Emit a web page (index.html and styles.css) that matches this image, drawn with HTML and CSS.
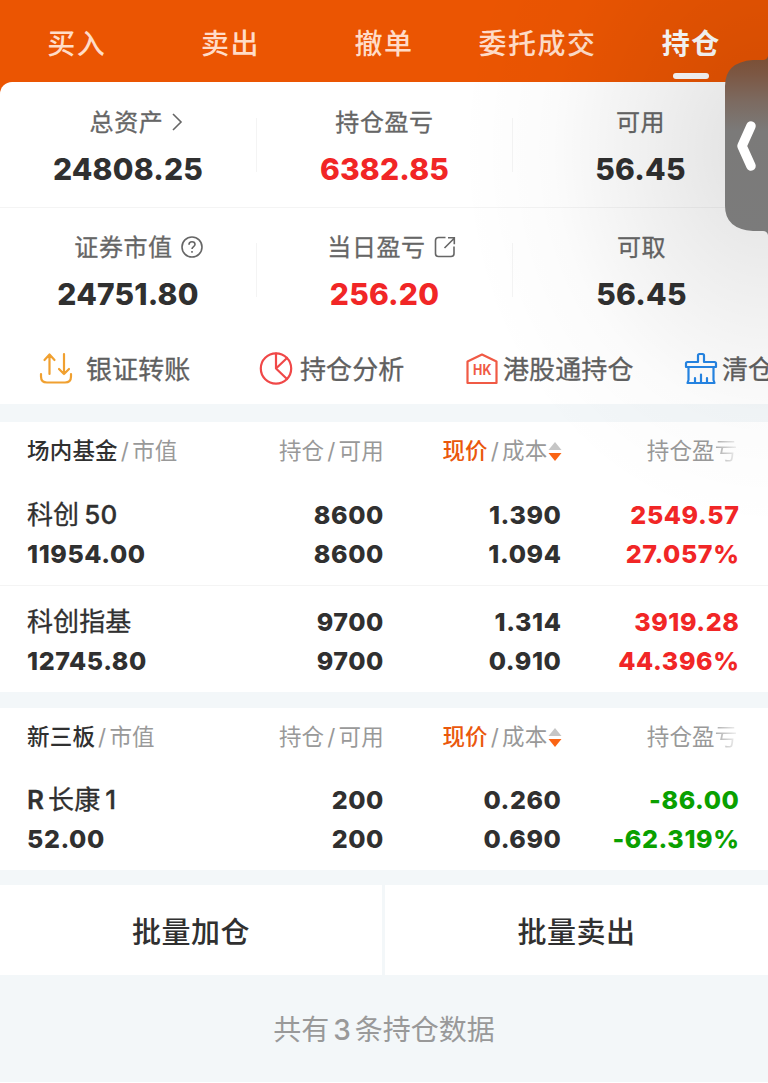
FILE: index.html
```html
<!DOCTYPE HTML>
<html lang="zh-CN">

<head>
	<meta charset="utf-8">
	<title>持仓</title>
	<link rel="stylesheet" href="styles.css">
</head>

<body>

	<nav class="tabs">
		<a class="tab">买入</a>
		<a class="tab">卖出</a>
		<a class="tab">撤单</a>
		<a class="tab">委托成交</a>
		<a class="tab active">持仓</a>
	</nav>

	<section class="account">
		<div class="summary">
			<div class="cell">
				<div class="label total"><span>总资产</span>
					<svg class="arrow" width="12" height="20" viewBox="0 0 12 20"><path d="M2 2l8 8-8 8"/></svg>
				</div>
				<div class="value">24808.25</div>
			</div>
			<div class="cell">
				<div class="label"><span>持仓盈亏</span></div>
				<div class="value up">6382.85</div>
			</div>
			<div class="cell">
				<div class="label"><span>可用</span></div>
				<div class="value">56.45</div>
			</div>
		</div>
		<div class="summary second">
			<div class="cell">
				<div class="label market"><span>证券市值</span>
					<svg class="help" width="22" height="22" viewBox="0 0 22 22"><circle cx="11" cy="11" r="10"/><path d="M8 8.700c0-1.800 1.300-2.900 3-2.900s3 1.100 3 2.600c0 2-3 2.300-3 4.600"/><path d="M11 15v1.800"/></svg>
				</div>
				<div class="value">24751.80</div>
			</div>
			<div class="cell">
				<div class="label today"><span>当日盈亏</span>
					<svg class="share" width="22" height="22" viewBox="0 0 22 22"><path d="M11.500 1.500H4.500Q1.500 1.500 1.500 4.500v13q0 3 3 3h12.500q3 0 3-3V10.500M10.500 12L20 2.500M14 1.800h6.300v6.500"/></svg>
				</div>
				<div class="value up">256.20</div>
			</div>
			<div class="cell">
				<div class="label cash"><span>可取</span></div>
				<div class="value cash">56.45</div>
			</div>
		</div>

		<div class="actions">
			<a class="action transfer">
				<svg width="34" height="34" viewBox="0 0 34 34" stroke="#f0a030"><path d="M2 22v2.500q0 6 6 6h18q6 0 6-6V22M10.500 22V3M5.500 8l5-5.500 5 5.500M25 2v20M20 17l5 5 5-5"/></svg>
				<span>银证转账</span>
			</a>
			<a class="action analysis">
				<svg width="34" height="34" viewBox="0 0 34 34" stroke="#f04848"><circle cx="17" cy="16.500" r="15.200"/><path d="M17 1.500v15L28 6M17 16.500l11 10.500"/></svg>
				<span>持仓分析</span>
			</a>
			<a class="action hk">
				<svg width="34" height="34" viewBox="0 0 34 34"><path d="M2.500 9.500L17 2.500l14.500 7v21.500h-29z" stroke="#f05a45"/><text x="8" y="22.500" textLength="18.500" lengthAdjust="spacingAndGlyphs">HK</text></svg>
				<span>港股通持仓</span>
			</a>
			<a class="action clear">
				<svg width="34" height="34" viewBox="0 0 34 34" stroke="#2585e5"><path d="M14 10V3.500q0-1.500 1.500-1.500h3q1.500 0 1.500 1.500V10h10.500q1.500 0 1.500 1.500v3.500H2v-3.500Q2 10 3.500 10zM4.500 15v13l-1 3h27l-1-3V15M11 30.500v-4.500M17 30.500v-8M23 30.500v-4.500"/></svg>
				<span>清仓</span>
			</a>
		</div>
	</section>

	<section class="holdings">
		<div class="row head">
			<div><b>场内基金</b><i>/</i>市值</div>
			<div>持仓<i>/</i>可用</div>
			<div><b class="sorted">现价</b><i>/</i>成本<svg class="sort" width="14" height="20" viewBox="0 0 14 20"><path d="M7 0l6.500 8H.500z" fill="#c6c6c6"/><path d="M.500 11h13L7 19z" fill="#fa6414"/></svg></div>
			<div>持仓盈<span class="fade">亏</span></div>
		</div>
		<div class="row first">
			<div><span class="name">科创<span class="num">50</span></span><br>11954.00</div>
			<div>8600<br>8600</div>
			<div>1.390<br>1.094</div>
			<div class="up">2549.57<br>27.057%</div>
		</div>
		<div class="row">
			<div><span class="name">科创指基</span><br>12745.80</div>
			<div>9700<br>9700</div>
			<div>1.314<br>0.910</div>
			<div class="up">3919.28<br>44.396%</div>
		</div>
	</section>

	<section class="holdings neeq">
		<div class="row head">
			<div><b>新三板</b><i>/</i>市值</div>
			<div>持仓<i>/</i>可用</div>
			<div><b class="sorted">现价</b><i>/</i>成本<svg class="sort" width="14" height="20" viewBox="0 0 14 20"><path d="M7 0l6.500 8H.500z" fill="#c6c6c6"/><path d="M.500 11h13L7 19z" fill="#fa6414"/></svg></div>
			<div>持仓盈<span class="fade">亏</span></div>
		</div>
		<div class="row first">
			<div><span class="name"><span class="letter">R</span>长康<span class="num">1</span></span><br>52.00</div>
			<div>200<br>200</div>
			<div>0.260<br>0.690</div>
			<div class="down">-86.00<br>-62.319%</div>
		</div>
	</section>

	<div class="batch">
		<a>批量加仓</a>
		<a>批量卖出</a>
	</div>

	<footer>共有<span>3</span>条持仓数据</footer>

	<div class="shade"></div>
	<svg class="handle" width="43" height="180" viewBox="0 0 43 180">
		<defs>
			<linearGradient id="grip" x1="0" y1="0" x2="0" y2="1">
				<stop offset="0" stop-color="#7b4e34"/>
				<stop offset=".1" stop-color="#7c5743"/>
				<stop offset=".25" stop-color="#7c6a60"/>
				<stop offset=".42" stop-color="#7b7a79"/>
				<stop offset="1" stop-color="#7b7b7b"/>
			</linearGradient>
		</defs>
		<path d="M43 0Q42 4 38 4H28Q0 6 0 30V150Q0 173 28 175H38Q42 175 43 179Z" fill="url(#grip)"/>
		<path d="M26 70L17 90l9 20" fill="none" stroke="#fff" stroke-width="9.500" stroke-linecap="round" stroke-linejoin="round"/>
	</svg>

</body>

</html>
```
FILE: styles.css
```css
* {
	box-sizing: border-box;
}

body {
	position: relative;
	margin: 0;
	width: 768px;
	height: 1083px;
	overflow: hidden;
	background: #f3f7f9;
	border-bottom: 1px solid #fff;
	color: #303030;
	font-family: Inter, "Noto Sans CJK SC", sans-serif;
}

.tabs {
	display: grid;
	grid-template-columns: repeat(5, 1fr);
	height: 94px;
	background: #eb5502;
}

.tab {
	display: flex;
	flex-direction: column;
	align-items: center;
	height: 82px;
	padding-top: 23px;
	color: #ffdcc8;
	font-size: 28px;
	line-height: 42px;
	letter-spacing: 1.5px;
	font-weight: 500;
}

.active {
	color: #fff;
	font-weight: 700;
}

.active::after {
	content: "";
	width: 36px;
	height: 6px;
	margin-top: 8px;
	border-radius: 3px;
	background: #fff;
}

.account {
	height: 322px;
	margin-top: -12px;
	border-radius: 12px 12px 0 0;
	background: #fff;
}

.summary {
	display: grid;
	grid-template-columns: repeat(3, 256px);
	height: 126px;
	padding-top: 36px;
	border-bottom: 1px solid #f4f4f4;
}

.second {
	border-bottom: 0;
	padding-top: 35px;
}

.cell {
	height: 54px;
	text-align: center;
}

.cell + .cell {
	border-left: 1px solid #f4f4f4;
}

.label {
	display: flex;
	justify-content: center;
	align-items: center;
	height: 36px;
	margin-top: -14px;
	color: #666;
	font-size: 24px;
	letter-spacing: .6px;
}

.label span,
.action span {
	padding-bottom: 4px;
}

.label span,
.action span,
.name {
	-webkit-text-stroke: .3px;
}

.total {
	padding-left: 17px;
}

.market {
	padding-left: 21px;
}

.today {
	padding-left: 14px;
}

.cash {
	padding-left: 2px;
}

.label svg {
	margin-left: 8px;
	fill: none;
	stroke: #666;
	stroke-width: 1.6;
}

.value {
	margin-top: 8.5px;
	font-size: 30px;
	line-height: 40px;
	font-weight: 800;
	letter-spacing: .2px;
}

.up {
	color: #f12626;
}

.down {
	color: #0aa000;
}

.actions {
	display: flex;
	height: 70px;
	padding: 3px 0 0 39px;
	overflow: hidden;
}

.action {
	display: flex;
	flex: none;
	align-items: center;
	height: 64px;
	color: #606060;
	font-size: 26px;
	letter-spacing: .1px;
	white-space: nowrap;
}

.action svg {
	margin-right: 7px;
	fill: none;
	stroke-width: 2.2;
	stroke-linecap: round;
	stroke-linejoin: round;
}

.transfer {
	width: 220px;
}

.transfer svg {
	margin-right: 13px;
}

.analysis {
	width: 206px;
}

.hk {
	width: 219px;
}

.hk svg,
.clear svg {
	margin-right: 4px;
}

.hk text {
	fill: #f05a45;
	font-size: 15px;
	font-weight: 700;
}

.holdings {
	margin-top: 18px;
	background: #fff;
}

.neeq {
	margin-top: 16px;
}

.row {
	display: grid;
	grid-template-columns: 201px 156px 177.5px 178px;
	height: 107px;
	padding: 17px 0 0 27px;
	font-size: 25px;
	font-weight: 800;
	line-height: 38.5px;
	letter-spacing: .6px;
}

.row > div + div {
	text-align: right;
}

.first {
	padding-top: 18px;
}

.first + .row {
	border-top: 1px solid #f4f4f4;
}

.neeq .first {
	height: 106px;
	padding-top: 17px;
}

.head {
	height: 56px;
	padding-top: 10px;
	color: #999;
	font-size: 22.5px;
	font-weight: 400;
	letter-spacing: .2px;
	white-space: nowrap;
}

.head > div:last-child {
	padding-right: 2px;
}

.head b {
	color: #303030;
	font-weight: 500;
}

.head .sorted {
	color: #ea580c;
}

.head i {
	margin: 0 3px;
	font-style: normal;
}

.sort {
	vertical-align: -3px;
}

.fade {
	background: linear-gradient(90deg, #aaa, #f4f4f4);
	background-clip: text;
	color: transparent;
}

.name {
	font-size: 26px;
	font-weight: 400;
	letter-spacing: .1px;
}

.num {
	margin-left: 5px;
	font-weight: 500;
}

.letter {
	margin-right: 4px;
	font-weight: 600;
}

.batch {
	display: grid;
	grid-template-columns: 382px 383px;
	gap: 3px;
	height: 90px;
	margin-top: 15px;
}

.batch a {
	display: flex;
	justify-content: center;
	align-items: center;
	padding-bottom: 1px;
	background: #fff;
	font-size: 29px;
	font-weight: 500;
	letter-spacing: .5px;
}

footer {
	height: 107px;
	color: #999;
	font-size: 28px;
	line-height: 110px;
	text-align: center;
}

footer span {
	margin: 0 4px;
	font-weight: 500;
}

/* soft shadow cast by the side handle */
.shade {
	position: absolute;
	top: 0;
	right: 0;
	width: 330px;
	height: 600px;
	background: radial-gradient(ellipse 310px 380px at 100% 150px, rgba(0, 0, 0, .12), rgba(0, 0, 0, .065) 35%, rgba(0, 0, 0, .015) 70%, transparent);
	pointer-events: none;
}

.handle {
	position: absolute;
	top: 56px;
	right: 0;
}
```
